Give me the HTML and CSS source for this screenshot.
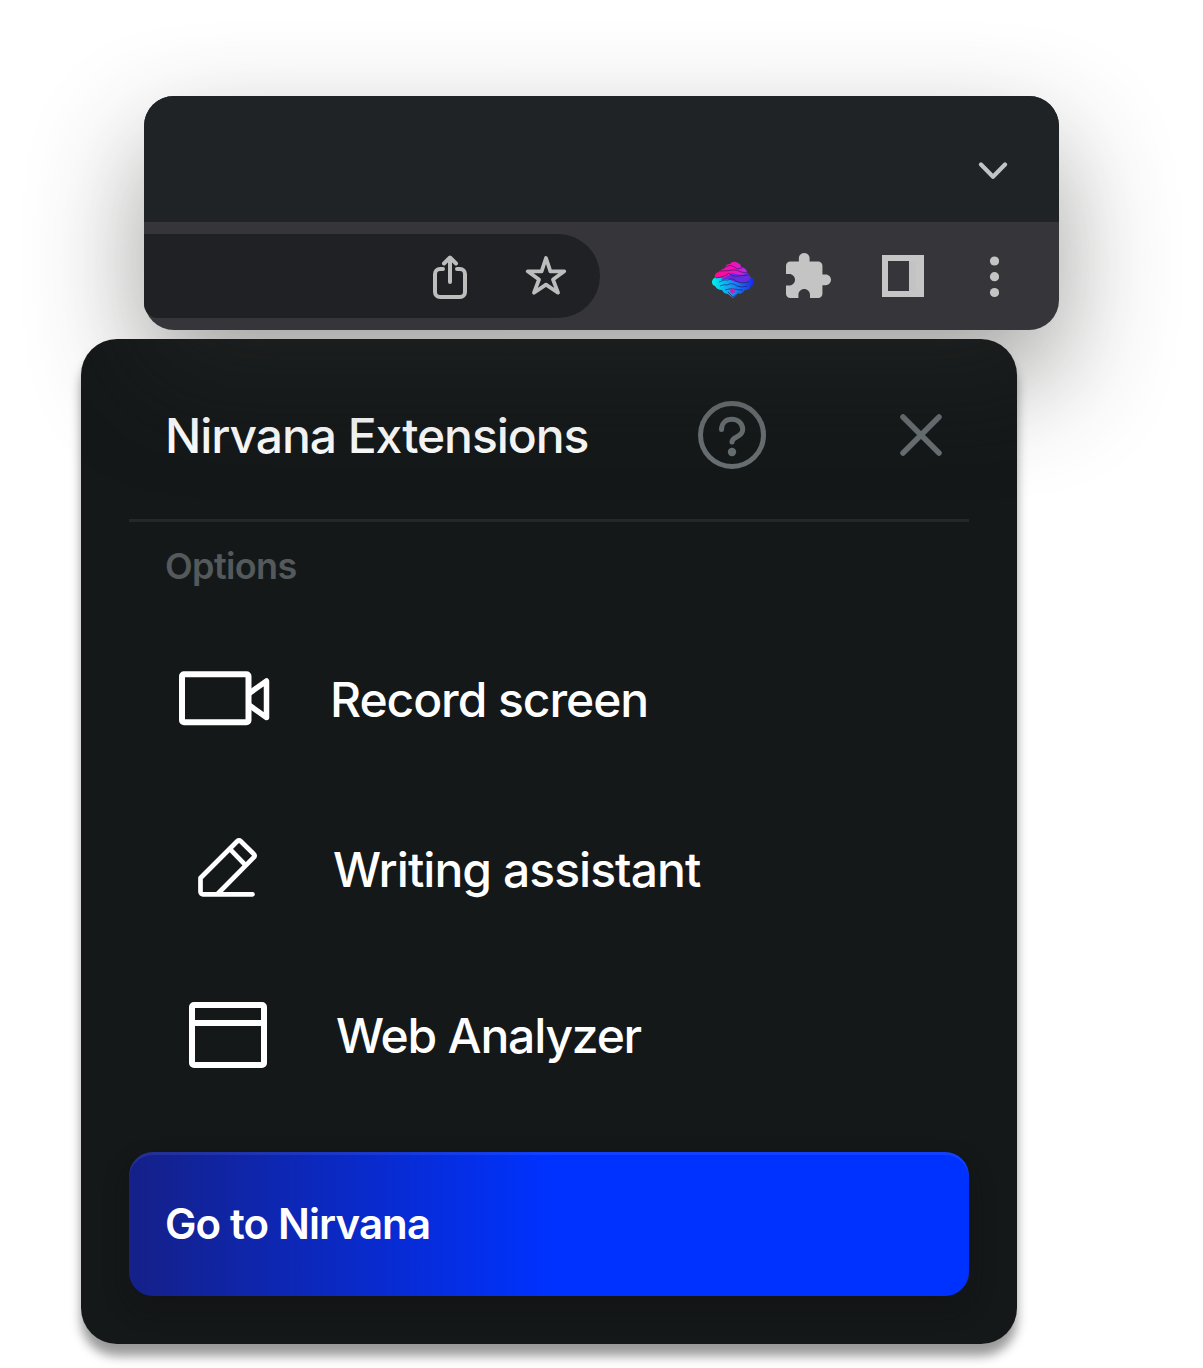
FILE: index.html
```html
<!DOCTYPE html>
<html lang="en">
<head>
<meta charset="utf-8">
<title>Nirvana Extensions</title>
<link rel="stylesheet" href="styles.css">
</head>
<body>
<header class="browser">
  <div class="tabs">
    <svg width="30" height="18" viewBox="0 0 30 18" fill="none" stroke="#c1c4c6" stroke-width="4.200" stroke-linecap="round" stroke-linejoin="round"><path d="M3 2.500l12 12.200L27 2.500"/></svg>
  </div>
  <div class="toolbar">
    <div class="omnibox">
      <svg width="34" height="44" viewBox="0 0 34 44" fill="none" stroke="#bdbdbd" stroke-width="4" stroke-linecap="round" stroke-linejoin="round"><path d="M10 14H7a5 5 0 0 0-5 5v18a5 5 0 0 0 5 5h20a5 5 0 0 0 5-5V19a5 5 0 0 0-5-5h-3M17 27V3M11 8.500l6-6 6 6"/></svg>
      <svg class="star" width="42" height="42" viewBox="0 0 42 42" fill="none" stroke="#bdbdbd" stroke-width="3.800" stroke-linejoin="round"><path d="M21 3l4.400 13.300H39.300L28 24.500l5 13.200-12-8.100-12 8.100 5-13.200L2.700 16.300h13.900z"/></svg>
    </div>
    <svg class="logo" width="42" height="37" viewBox="0 0 42 37">
      <defs>
        <linearGradient id="sea" x1="0" y1="0" x2="1" y2="0"><stop offset="0" stop-color="#00f2ee"/><stop offset=".5" stop-color="#148df5"/><stop offset="1" stop-color="#1a27e6"/></linearGradient>
        <linearGradient id="sky" x1="0" y1="0" x2="1" y2="0"><stop offset="0" stop-color="#ff0a8c"/><stop offset=".6" stop-color="#f012b8"/><stop offset="1" stop-color="#b428ee"/></linearGradient>
      </defs>
      <path fill="url(#sea)" d="M4 16h34q4 1 4 5 0 3-3 4-1 4-6 4-3 4-7 4l-5 4-5-4q-4 0-6-4-5 0-7-4-3-1-3-4 0-3 4-5z"/>
      <path fill="#682be0" d="M13 14l12-5 11 3 3 5-6 5-10-1-7-3-7 1z"/>
      <path fill="url(#sky)" d="M3 17q-1-5 4-6 1-2 6-4 0-4 5-4 3-4 8-1 3 1 3 4 6 1 6 6l-6 2-9-2-8 5z"/>
      <path fill="none" stroke="#20205f" stroke-opacity=".8" stroke-width=".8" d="M13 6q6-3 9 0t8 1M8 10q8 0 12-1t9 2l6 1M4 17q9-1 13-5 3 4 9 3l11-1M7 21q6-3 9-2 4-3 8 1 5 3 13 1M8 25q4-2 7-1 5-3 10 1 5 2 10 0M13 29q6-2 9-1 5 1 9 1M16 31l5 5 6-4"/>
      <circle cx="20.500" cy="30" r="2.400" fill="#d51aa7"/>
    </svg>
    <svg class="puzzle" width="45" height="45" viewBox="2 1 21 21" fill="#c4c4c4"><path d="M20.500 11H19V7c0-1.100-.9-2-2-2h-4V3.500C13 2.120 11.880 1 10.500 1S8 2.120 8 3.500V5H4c-1.100 0-2 .9-2 2v3.800h1.500c1.490 0 2.700 1.210 2.700 2.700s-1.210 2.700-2.700 2.700H2V20c0 1.100.9 2 2 2h3.800v-1.500c0-1.490 1.210-2.700 2.700-2.700s2.700 1.210 2.700 2.700V22H17c1.100 0 2-.9 2-2v-4h1.500c1.380 0 2.500-1.120 2.500-2.500S21.880 11 20.500 11z"/></svg>
    <svg class="panel" width="42" height="42" viewBox="0 0 42 42"><path fill="#c6c6c6" fill-rule="evenodd" d="M0 0h42v42H0zM6 6v30h21V6z"/><path fill="#c3c3c3" d="M27 6h7v30h-7z"/></svg>
    <svg class="dots" width="10" height="42" viewBox="0 0 10 42" fill="#c4c4c4"><circle cx="5.500" cy="5" r="4.600"/><circle cx="5.500" cy="20.700" r="4.600"/><circle cx="5.500" cy="36.500" r="4.600"/></svg>
  </div>
</header>
<main class="popup">
  <div class="head">
    <h1>Nirvana Extensions</h1>
    <svg class="help" width="68" height="68" viewBox="0 0 68 68" fill="none" stroke="#697073" stroke-width="5" stroke-linecap="round"><circle cx="34" cy="34" r="31.500"/><path d="M23.500 28.500C23.500 22 28 18.300 34 18.300S44.700 22.500 44.700 28.500C44.700 36.500 34 35.500 34 41"/><circle cx="34" cy="51" r="4.200" fill="#697073" stroke="none"/></svg>
    <svg width="44" height="44" viewBox="0 0 44 44" stroke="#697073" stroke-width="5.500" stroke-linecap="round"><path d="M4 4l36 36M40 4L4 40"/></svg>
  </div>
  <h2>Options</h2>
  <ul class="options">
    <li class="record"><svg width="92" height="56" viewBox="0 0 92 56" fill="none" stroke="#fff" stroke-width="6" stroke-linejoin="round"><rect x="3" y="3.300" width="66.500" height="48" rx="2"/><path stroke-width="5.500" d="M70 22.500L87.500 10v36.500L70 34"/></svg><span>Record screen</span></li>
    <li class="write"><svg width="60" height="60" viewBox="0 0 60 60" fill="none" stroke="#fff" stroke-width="4.700" stroke-linecap="round" stroke-linejoin="round"><path d="M54.500 57.300H5a2.500 2.500 0 0 1-2.500-2.500V41L39.500 4a2 2 0 0 1 3 0L56 17.200a2 2 0 0 1 0 3L20 56.500M32 12.200L47 27.700"/></svg><span>Writing assistant</span></li>
    <li class="web"><svg width="78" height="66" viewBox="0 0 78 66" fill="none" stroke="#fff" stroke-width="6"><rect x="3" y="3" width="72" height="60" rx="2"/><path d="M3 21h72"/></svg><span>Web Analyzer</span></li>
  </ul>
  <button class="go" type="button">Go to Nirvana</button>
</main>
</body>
</html>
```
FILE: styles.css
```css
* { box-sizing: border-box; }
body {
  margin: 0;
  height: 1368px;
  padding: 96px 0 0 81px;
  overflow: hidden;
  background: #fff;
  font-family: Inter, "Liberation Sans", sans-serif;
}
svg { display: block; flex: none; }

.browser {
  position: relative;
  z-index: 1;
  width: 915px;
  height: 234px;
  margin-left: 63px;
  border-radius: 30px;
  background: #36363a;
  box-shadow: 0 48px 112px rgba(42, 42, 41, .45);
}
.tabs {
  display: flex;
  justify-content: flex-end;
  height: 126px;
  padding: 66px 51px 0 0;
  border-radius: 30px 30px 0 0;
  background: #1f2325;
}
.toolbar { display: flex; align-items: center; height: 108px; }
.omnibox {
  display: flex;
  align-items: center;
  width: 456px;
  height: 84px;
  padding: 2px 0 0 289px;
  border-radius: 0 42px 42px 14px;
  background: #202124;
}
.star { margin: 0 0 2px 58px; }
.logo { margin: 7px 0 0 112px; }
.puzzle { margin: -1px 0 0 32px; }
.panel { margin-left: 51px; }
.dots { margin: 2px 0 0 65px; }

.popup {
  width: 936px;
  height: 1005px;
  margin-top: 9px;
  padding: 0 48px;
  border-radius: 36px;
  background: #141819;
  box-shadow: 0 12px 11px rgba(0, 0, 0, .4);
}
.head {
  display: flex;
  align-items: center;
  height: 183px;
  padding: 12px 26px 0 36px;
  border-bottom: 3px solid #24282a;
}
h1 { flex: 1; margin: 1px 0 0; font-size: 48px; font-weight: 500; line-height: 60px; letter-spacing: -.022em; color: #fff; }
.help { margin-right: 133px; }
h2 { margin: 22px 0 27px; padding-left: 36px; font-size: 36px; font-weight: 600; line-height: 44px; letter-spacing: -.017em; color: #54595b; }
.options { margin: 0; padding: 0; list-style: none; }
.options li {
  display: flex;
  align-items: center;
  height: 168px;
  font-size: 48px;
  font-weight: 500;
  line-height: 60px;
  letter-spacing: -.02em;
  color: #fff;
}
.record { padding-left: 50px; }
.record svg { margin-right: 59px; }
.record span { padding-top: 2px; letter-spacing: -.022em; }
.write { padding-left: 69px; }
.write svg { margin-right: 75px; }
.write span { padding-top: 5px; }
.web { padding-left: 60px; }
.web svg { margin-right: 69px; }
.web span { padding-top: 2px; letter-spacing: -.025em; }
.go {
  display: block;
  width: 840px;
  height: 144px;
  margin-top: 33px;
  padding: 0 36px;
  border: 0;
  border-radius: 24px;
  background: linear-gradient(90deg, #152088 0, #0032ff 50%);
  box-shadow: inset 0 3px rgba(255, 255, 255, .07), 0 12px 24px rgba(18, 16, 16, .4);
  color: #fff;
  font: 600 42px/52px Inter, "Liberation Sans", sans-serif;
  letter-spacing: -.021em;
  text-align: left;
}
```
